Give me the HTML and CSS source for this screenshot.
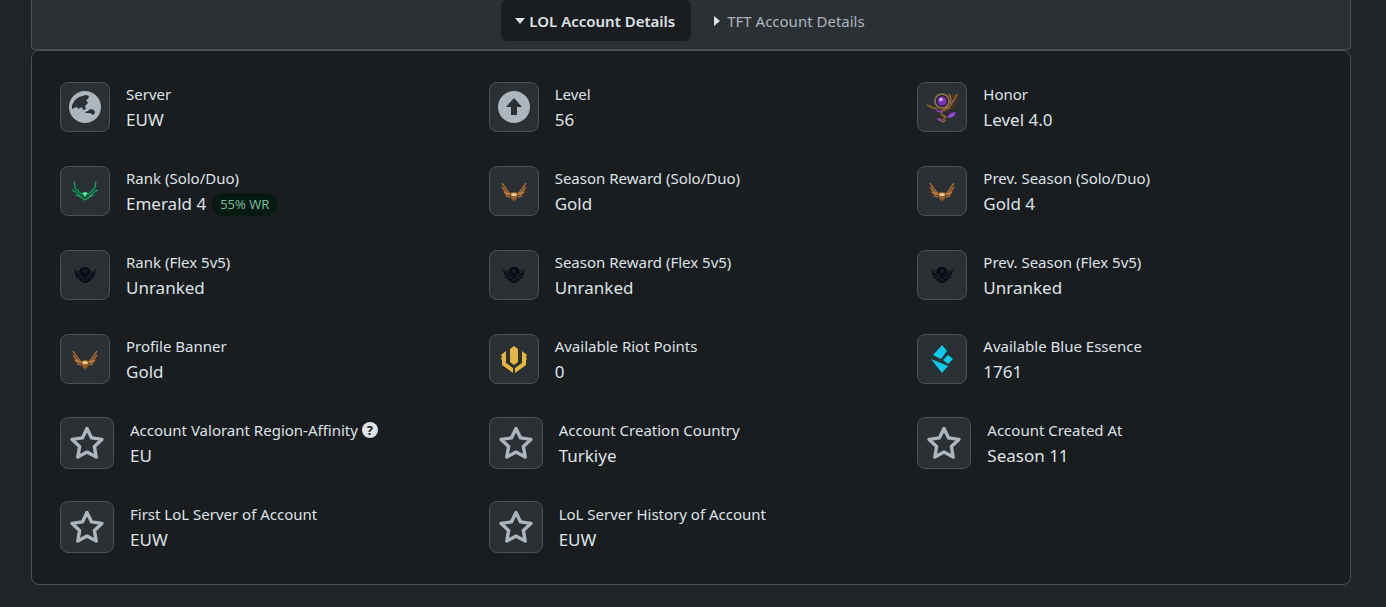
FILE: index.html
```
<!DOCTYPE html>
<html lang="en">

<head>
    <meta charset="UTF-8">
    <meta name="viewport" content="width=device-width, initial-scale=1.0">
    <title>LOL Account Details</title>
    <link rel="stylesheet" href="styles.css">
</head>

<body>
    <!-- Shared icons -->
    <svg class="sprite" aria-hidden="true">
        <symbol id="star" viewBox="0 0 34 34">
            <path d="M17 2.5l4.6 9.4 10.3 1.5-7.5 7.2 1.8 10.4-9.2-4.9-9.2 4.9 1.8-10.4-7.5-7.2 10.3-1.5z" fill="none" stroke="#adb5bd" stroke-width="3.4" stroke-linejoin="round" />
        </symbol>
        <symbol id="gold" viewBox="0 0 28 24">
            <path d="M2 3l4 5 4 6 4-1 4 1 4-6 4-5v5l-1 3 1 1-2 3-1 2-4 1-2 2-3 3-3-3-2-2-4-1-1-2-2-3 1-1-1-3z" fill="#5a3a22" />
            <path d="M2 4l4 6 4 5M2 8l4 5 4 3M4 13l4 3M26 4l-4 6-4 5M26 8l-4 5-4 3M24 13l-4 3M6 17l4 1M22 17l-4 1" fill="none" stroke="#b57a42" stroke-width="1.1" />
            <path d="M10 14l4-1 4 1-1 5-3 3-3-3z" fill="#93602f" />
            <path d="M11 15l3-1 3 1-1 2h-4z" fill="#f0d191" />
        </symbol>
        <symbol id="unranked" viewBox="0 0 24 18">
            <path d="M1 3l5 3Q7 1 12 1t6 5l5-3-1 5-1 1v3l-3 1q-2 4-6 4t-6-4l-3-1V9L2 8z" fill="#090e16" />
            <path d="M2 5l6 4 2 4M22 5l-6 4-2 4M4 10l4 2M20 10l-4 2M10 5l2-1 2 1-2 2zM10 14h4" fill="none" stroke="#222b35" stroke-width=".9" />
        </symbol>
    </svg>

    <main class="account">
        <nav class="tabs">
            <button class="tab active" type="button">
                <svg width="10" height="6" viewBox="0 0 10 6"><path d="M0 0h10L5 6z" fill="currentColor" /></svg>
                LOL Account Details
            </button>
            <button class="tab" type="button">
                <svg width="10" height="10" viewBox="0 0 10 10"><path d="M1 0l6 5-6 5z" fill="#dee2e6" /></svg>
                TFT Account Details
            </button>
        </nav>

        <section class="details">
            <div class="item">
                <span class="icon">
                    <svg width="32" height="32" viewBox="0 0 32 32">
                        <circle cx="16" cy="16" r="16" fill="#adb5bd" />
                        <path d="M3 18V14l3-5 4-3 7-2 3 1-1 3-2 1 2 3-3 3 1 3-3 1-1-3-4 2-1-2-3 1zM16 21l3-1 2-2 4 1 1 3-2 2-3-2h-4z" fill="#2b3035" />
                    </svg>
                </span>
                <div class="text">
                    <div class="label">Server</div>
                    <div class="value">EUW</div>
                </div>
            </div>
            <div class="item">
                <span class="icon">
                    <svg width="32" height="32" viewBox="0 0 32 32">
                        <circle cx="16" cy="16" r="16" fill="#adb5bd" />
                        <path d="M16 7l8 9h-5v8h-6v-8H8z" fill="#2b3035" />
                    </svg>
                </span>
                <div class="text">
                    <div class="label">Level</div>
                    <div class="value">56</div>
                </div>
            </div>
            <div class="item">
                <span class="icon">
                    <svg width="34" height="34" viewBox="0 0 34 34">
                        <path d="M1 14l8 2 4 3 8-1 3-5-1-6 1-5 2 3 3-3v4l4-3-1 7-3 3 1 3-6 4-7 3 5 3-4 7-4-5 2-3-3-3 3-2-6-1-5-1-3-3z" fill="#4a3524" />
                        <path d="M2 15l6 3 5 1M24 4l2 5-1 5M32 4l-3 6-4 6-7 4M15 22l6-3 4-1M16 24l5 3-3 3M15 30l3 2 3-2" fill="none" stroke="#8a6432" stroke-width="1.5" />
                        <circle cx="17" cy="11" r="7" fill="#2b2230" stroke="#8f7a50" stroke-width="1.6" />
                        <circle cx="17" cy="11" r="4.6" fill="#7a35bd" />
                        <circle cx="16" cy="9.5" r="1.8" fill="#dcb0ff" />
                        <path d="M10 20l6 1 2 2-5-1zM22 27l4-4 5-1-2 4-4 2zM12 28l4 1 1 3-4-2z" fill="#9a43dc" />
                    </svg>
                </span>
                <div class="text">
                    <div class="label">Honor</div>
                    <div class="value">Level 4.0</div>
                </div>
            </div>

            <div class="item">
                <span class="icon">
                    <svg width="30" height="24" viewBox="0 0 30 24">
                        <path d="M4 1l3 7 5 6 3-2 3 2 5-6 3-7v9l3 1-4 3 1 2-5 2-2 2-4 3-4-3-2-2-5-2 1-2-4-3 3-1z" fill="#12503a" />
                        <path d="M4 2l1 7 7 7M26 2l-1 7-7 7M2 11l4 2 6 6M28 11l-4 2-6 6M6 16l5 2 4 3 4-3 5-2" fill="none" stroke="#2ba568" stroke-width="1" />
                        <path d="M12 14l3-1 3 1-3 4z" fill="#55e6a1" />
                    </svg>
                </span>
                <div class="text">
                    <div class="label">Rank (Solo/Duo)</div>
                    <div class="value">Emerald 4 <span class="badge">55% WR</span></div>
                </div>
            </div>
            <div class="item">
                <span class="icon"><svg width="28" height="24"><use href="#gold" /></svg></span>
                <div class="text">
                    <div class="label">Season Reward (Solo/Duo)</div>
                    <div class="value">Gold</div>
                </div>
            </div>
            <div class="item">
                <span class="icon"><svg width="28" height="24"><use href="#gold" /></svg></span>
                <div class="text">
                    <div class="label">Prev. Season (Solo/Duo)</div>
                    <div class="value">Gold 4</div>
                </div>
            </div>

            <div class="item">
                <span class="icon"><svg width="24" height="18"><use href="#unranked" /></svg></span>
                <div class="text">
                    <div class="label">Rank (Flex 5v5)</div>
                    <div class="value">Unranked</div>
                </div>
            </div>
            <div class="item">
                <span class="icon"><svg width="24" height="18"><use href="#unranked" /></svg></span>
                <div class="text">
                    <div class="label">Season Reward (Flex 5v5)</div>
                    <div class="value">Unranked</div>
                </div>
            </div>
            <div class="item">
                <span class="icon"><svg width="24" height="18"><use href="#unranked" /></svg></span>
                <div class="text">
                    <div class="label">Prev. Season (Flex 5v5)</div>
                    <div class="value">Unranked</div>
                </div>
            </div>

            <div class="item">
                <span class="icon"><svg width="28" height="24"><use href="#gold" /></svg></span>
                <div class="text">
                    <div class="label">Profile Banner</div>
                    <div class="value">Gold</div>
                </div>
            </div>
            <div class="item">
                <span class="icon">
                    <svg width="28" height="28" viewBox="0 0 28 28">
                        <path d="M14 1l4 3v13l-4 3-4-3V4zM6 6v12l7 5v5L2 20v-5l-1-1 1-2-1-2zM22 6v12l-7 5v5l11-8v-5l1-1-1-2 1-2z" fill="#e6b73c" />
                    </svg>
                </span>
                <div class="text">
                    <div class="label">Available Riot Points</div>
                    <div class="value">0</div>
                </div>
            </div>
            <div class="item">
                <span class="icon">
                    <svg width="28" height="28" viewBox="0 0 28 28">
                        <path d="M14 0l5 6-6 8-8-4zM20 10l5 4-5 5-5-4zM3 14l17 7-6 7z" fill="#0bcbe9" />
                    </svg>
                </span>
                <div class="text">
                    <div class="label">Available Blue Essence</div>
                    <div class="value">1761</div>
                </div>
            </div>

            <div class="item">
                <span class="icon wide"><svg width="34" height="34"><use href="#star" /></svg></span>
                <div class="text">
                    <div class="label">Account Valorant Region-Affinity
                        <button class="help" type="button" aria-label="Help">?</button>
                    </div>
                    <div class="value">EU</div>
                </div>
            </div>
            <div class="item">
                <span class="icon wide"><svg width="34" height="34"><use href="#star" /></svg></span>
                <div class="text">
                    <div class="label">Account Creation Country</div>
                    <div class="value">Turkiye</div>
                </div>
            </div>
            <div class="item">
                <span class="icon wide"><svg width="34" height="34"><use href="#star" /></svg></span>
                <div class="text">
                    <div class="label">Account Created At</div>
                    <div class="value">Season 11</div>
                </div>
            </div>

            <div class="item">
                <span class="icon wide"><svg width="34" height="34"><use href="#star" /></svg></span>
                <div class="text">
                    <div class="label">First LoL Server of Account</div>
                    <div class="value">EUW</div>
                </div>
            </div>
            <div class="item">
                <span class="icon wide"><svg width="34" height="34"><use href="#star" /></svg></span>
                <div class="text">
                    <div class="label">LoL Server History of Account</div>
                    <div class="value">EUW</div>
                </div>
            </div>
        </section>
    </main>
</body>

</html>
```
FILE: styles.css
```
* {
    margin: 0;
    padding: 0;
    box-sizing: border-box;
}

:root {
    --page: #212529;
    --panel: #1a1d20;
    --raised: #2b3035;
    --border: #495057;
    --text: #dee2e6;
    --muted: #adb5bd;
}

body {
    padding: 0 35px 0 31px;
    background: var(--page);
    color: var(--text);
    font-family: "Segoe UI", "Noto Sans", sans-serif;
    font-size: 15px;
}

button {
    border: none;
    font: inherit;
    cursor: pointer;
}

.sprite {
    display: none;
}

.account {
    max-width: 1320px;
    margin: 0 auto;
}

/* Tabs */
.tabs {
    display: flex;
    justify-content: center;
    gap: 8px;
    padding-bottom: 8px;
    background: var(--raised);
    border: 1px solid var(--border);
    border-top: none;
    border-radius: 0 0 4px 4px;
}

.tab {
    display: flex;
    align-items: center;
    gap: 4px;
    height: 41px;
    padding: 0 16px 0 14px;
    border-radius: 6px;
    background: none;
    color: var(--muted);
}

.tab.active {
    background: var(--panel);
    color: var(--text);
    font-weight: 600;
}

/* Account details */
.details {
    display: grid;
    grid-template-columns: repeat(3, 1fr);
    gap: 32px 24px;
    padding: 30px 28px 31px;
    background: var(--panel);
    border: 1px solid var(--border);
    border-radius: 8px;
}

.item {
    display: flex;
    align-items: center;
    gap: 16px;
    height: 52px;
}

.icon {
    display: flex;
    flex: none;
    align-items: center;
    justify-content: center;
    width: 50px;
    height: 50px;
    background: var(--raised);
    border: 1px solid var(--border);
    border-radius: 8px;
}

.icon.wide {
    width: 54px;
    height: 52px;
}

.label {
    display: flex;
    align-items: center;
    gap: 4px;
    line-height: 26px;
}

.value {
    display: flex;
    align-items: center;
    gap: 6px;
    font-size: 17px;
    line-height: 26px;
}

.badge {
    padding: 0 8px;
    border-radius: 12px;
    background: #051b11;
    color: #75b798;
    font-size: 13px;
    line-height: 23px;
}

.help {
    width: 16px;
    height: 16px;
    border-radius: 50%;
    background: var(--text);
    color: var(--panel);
    font-size: 13px;
    font-weight: 700;
    line-height: 16px;
}

@media (max-width: 900px) {
    .details {
        grid-template-columns: 1fr;
    }
}
```
